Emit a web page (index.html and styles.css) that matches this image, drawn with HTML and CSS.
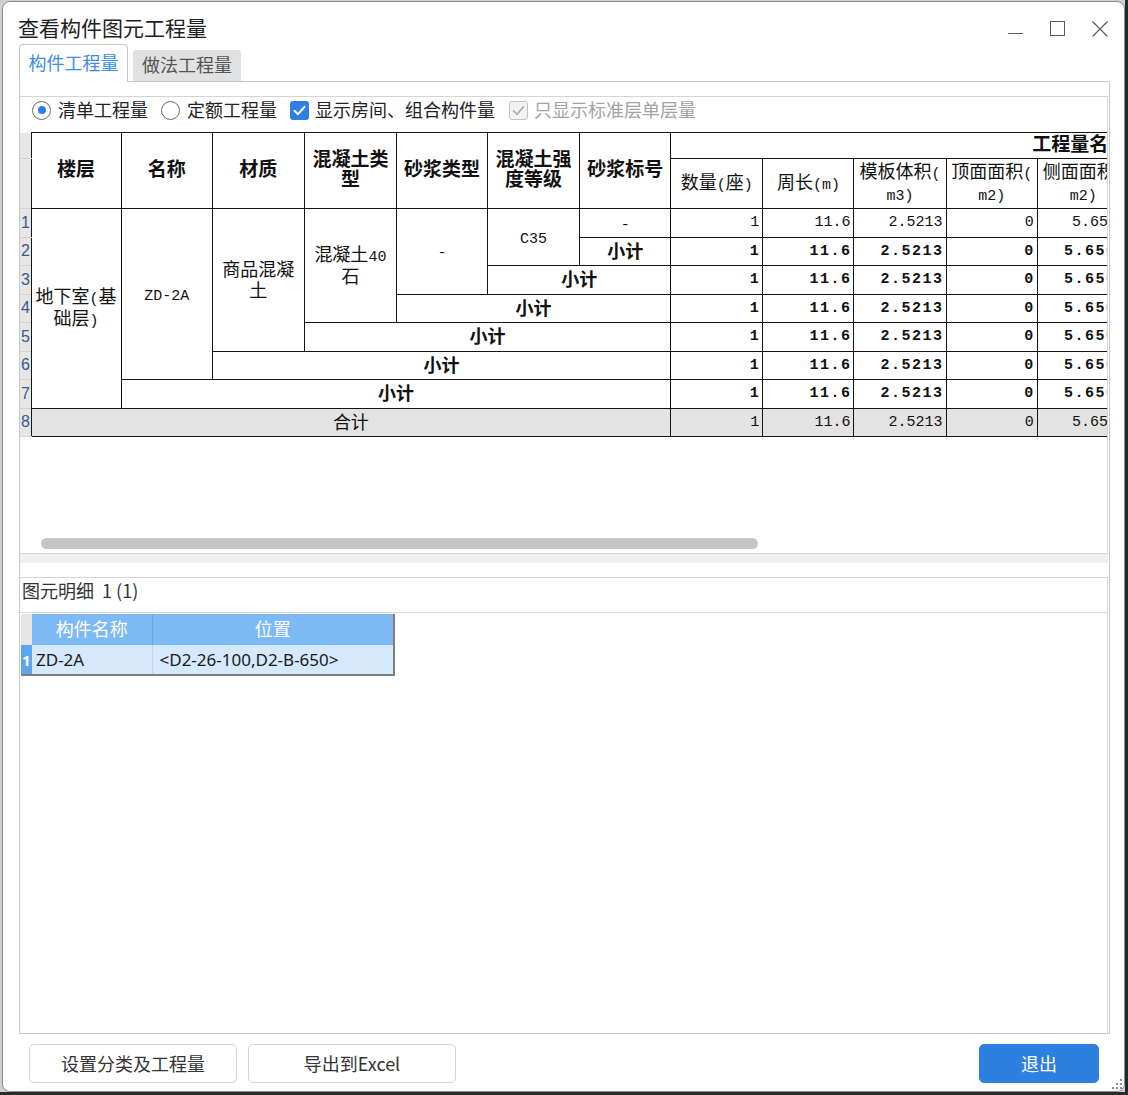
FILE: index.html
```html
<!DOCTYPE html>
<html lang="zh-CN">
<head>
<meta charset="utf-8">
<title>查看构件图元工程量</title>
<link rel="stylesheet" href="styles.css">
</head>
<body>
<div class="window">
  <div class="titlebar">
    <div class="title">查看构件图元工程量</div>
    <div class="wctrls">
      <svg class="wc" width="16" height="16" viewBox="0 0 16 16"><line x1="0" y1="12.5" x2="15" y2="12.5" stroke="#5a5a5a" stroke-width="1"/></svg>
      <svg class="wc wc-gap" width="16" height="16" viewBox="0 0 16 16"><rect x="0.5" y="0.5" width="14" height="14" fill="none" stroke="#5a5a5a" stroke-width="1"/></svg>
      <svg class="wc wc-gap" width="16" height="16" viewBox="0 0 16 16"><path d="M0.5 0.5 L15.5 15.5 M15.5 0.5 L0.5 15.5" stroke="#5a5a5a" stroke-width="1.1" fill="none"/></svg>
    </div>
  </div>

  <div class="tabs">
    <div class="tab active">构件工程量</div>
    <div class="tab inactive">做法工程量</div>
  </div>

  <div class="pane">
    <div class="group">
      <div class="opts">
        <span class="radio on"></span><span class="lbl">清单工程量</span>
        <span class="radio gap"></span><span class="lbl">定额工程量</span>
        <span class="cb gap"><svg width="19" height="19" viewBox="0 0 19 19"><path d="M4.5 9.8 L8 13.2 L14.5 5.8" stroke="#fff" stroke-width="2" fill="none" stroke-linecap="round" stroke-linejoin="round"/></svg></span><span class="lbl lbl-cb">显示房间、组合构件量</span>
        <span class="cb dis gap"><svg width="17" height="17" viewBox="0 0 17 17"><path d="M3.5 8.8 L7 12.2 L13.5 4.8" stroke="#a9a9a9" stroke-width="1.6" fill="none" stroke-linecap="round" stroke-linejoin="round"/></svg></span><span class="lbl lbl-cb dis-t">只显示标准层单层量</span>
      </div>
      <div class="grid-wrap">
        <table class="qt">
          <colgroup>
            <col class="w-rn">
            <col class="w90"><col class="w91"><col class="w92"><col class="w92"><col class="w91"><col class="w92">
            <col class="w91"><col class="w92"><col class="w91"><col class="w92"><col class="w91"><col class="w92">
          </colgroup>
          <thead>
            <tr class="h1">
              <th class="rn"></th>
              <th rowspan="2">楼层</th>
              <th rowspan="2">名称</th>
              <th rowspan="2">材质</th>
              <th rowspan="2">混凝土类<br>型</th>
              <th rowspan="2">砂浆类型</th>
              <th rowspan="2">混凝土强<br>度等级</th>
              <th rowspan="2">砂浆标号</th>
              <th colspan="5" class="grp">工程量名称</th>
            </tr>
            <tr class="h2">
              <th class="rn"></th>
              <th class="sub">数量<span class="a">(</span>座<span class="a">)</span></th>
              <th class="sub">周长<span class="a">(m)</span></th>
              <th class="sub">模板体积<span class="a">(</span><br><span class="a">m3)</span></th>
              <th class="sub">顶面面积<span class="a">(</span><br><span class="a">m2)</span></th>
              <th class="sub">侧面面积<span class="a">(</span><br><span class="a">m2)</span></th>
            </tr>
          </thead>
          <tbody>
            <tr>
              <td class="rn">1</td>
              <td rowspan="7" class="tx">地下室<span class="a">(</span>基<br>础层<span class="a">)</span></td>
              <td rowspan="6" class="tx"><span class="a">ZD-2A</span></td>
              <td rowspan="5" class="tx">商品混凝<br>土</td>
              <td rowspan="4" class="tx">混凝土<span class="a">40</span><br>石</td>
              <td rowspan="3" class="tx"><span class="a">-</span></td>
              <td rowspan="2" class="tx"><span class="a">C35</span></td>
              <td class="tx"><span class="a">-</span></td>
              <td class="num">1</td><td class="num">11.6</td><td class="num">2.5213</td><td class="num">0</td><td class="num">5.6504</td>
            </tr>
            <tr class="b">
              <td class="rn">2</td>
              <td class="tx sum">小计</td>
              <td class="num">1</td><td class="num">11.6</td><td class="num">2.5213</td><td class="num">0</td><td class="num">5.6504</td>
            </tr>
            <tr class="b">
              <td class="rn">3</td>
              <td colspan="2" class="tx sum">小计</td>
              <td class="num">1</td><td class="num">11.6</td><td class="num">2.5213</td><td class="num">0</td><td class="num">5.6504</td>
            </tr>
            <tr class="b">
              <td class="rn">4</td>
              <td colspan="3" class="tx sum">小计</td>
              <td class="num">1</td><td class="num">11.6</td><td class="num">2.5213</td><td class="num">0</td><td class="num">5.6504</td>
            </tr>
            <tr class="b">
              <td class="rn">5</td>
              <td colspan="4" class="tx sum">小计</td>
              <td class="num">1</td><td class="num">11.6</td><td class="num">2.5213</td><td class="num">0</td><td class="num">5.6504</td>
            </tr>
            <tr class="b">
              <td class="rn">6</td>
              <td colspan="5" class="tx sum">小计</td>
              <td class="num">1</td><td class="num">11.6</td><td class="num">2.5213</td><td class="num">0</td><td class="num">5.6504</td>
            </tr>
            <tr class="b">
              <td class="rn">7</td>
              <td colspan="6" class="tx sum">小计</td>
              <td class="num">1</td><td class="num">11.6</td><td class="num">2.5213</td><td class="num">0</td><td class="num">5.6504</td>
            </tr>
            <tr class="total">
              <td class="rn">8</td>
              <td colspan="7" class="tx">合计</td>
              <td class="num">1</td><td class="num">11.6</td><td class="num">2.5213</td><td class="num">0</td><td class="num">5.6504</td>
            </tr>
          </tbody>
        </table>
        <div class="hscroll"><div class="thumb"></div></div>
      </div>
    </div>

    <div class="split"></div>

    <div class="detail">
      <div class="detail-label">图元明细&nbsp;&nbsp;1 (1)</div>
      <div class="detail-body">
        <table class="dt">
          <colgroup><col class="d-rn"><col class="d-c1"><col class="d-c2"></colgroup>
          <thead>
            <tr><th class="d-rnh"></th><th>构件名称</th><th>位置</th></tr>
          </thead>
          <tbody>
            <tr><td class="d-rnc">1</td><td class="d-name">ZD-2A</td><td class="d-pos">&lt;D2-26-100,D2-B-650&gt;</td></tr>
          </tbody>
        </table>
      </div>
    </div>
  </div>

  <div class="buttons">
    <button class="btn">设置分类及工程量</button>
    <button class="btn btn-gap">导出到Excel</button>
    <button class="btn primary">退出</button>
  </div>

  <svg class="grip" width="12" height="12" viewBox="0 0 12 12">
    <rect x="9" y="1" width="2" height="2" fill="#8a8a8a"/>
    <rect x="5" y="5" width="2" height="2" fill="#8a8a8a"/>
    <rect x="9" y="5" width="2" height="2" fill="#8a8a8a"/>
    <rect x="1" y="9" width="2" height="2" fill="#8a8a8a"/>
    <rect x="5" y="9" width="2" height="2" fill="#8a8a8a"/>
    <rect x="9" y="9" width="2" height="2" fill="#8a8a8a"/>
  </svg>
</div>
</body>
</html>
```

FILE: styles.css
```css
* { box-sizing: border-box; }
html, body { margin: 0; padding: 0; }
body {
  width: 1128px;
  height: 1095px;
  overflow: hidden;
  font-family: "Noto Sans CJK SC", "Noto Sans", sans-serif;
  color: #222;
  background:
    linear-gradient(to bottom, rgba(0,0,0,0) 1092px, #2b2b2b 1092px),
    linear-gradient(to right, #cfcfcf 1125px, #1d2a31 1125px);
}

.window {
  margin: 1px 0 0 2px;
  width: 1123px;
  height: 1091px;
  border: 1px solid #8e8e8e;
  border-radius: 8px;
  background: #fff;
  display: flex;
  flex-direction: column;
  position: relative;
  overflow: hidden;
}

/* title bar */
.titlebar {
  height: 42px;
  flex: none;
  display: flex;
  justify-content: space-between;
  align-items: flex-start;
}
.title {
  padding: 11px 0 0 15px;
  font-size: 21px;
  line-height: 28px;
  color: #1e1e1e;
}
.wctrls {
  display: flex;
  padding: 19px 16px 0 0;
}
.wc { display: block; }
.wc-gap { margin-left: 26px; }

/* tabs */
.tabs {
  height: 38px;
  flex: none;
  display: flex;
  align-items: flex-end;
  padding-left: 16px;
  position: relative;
  z-index: 1;
}
.tab {
  font-size: 18px;
  line-height: 20px;
  display: flex;
  align-items: center;
  justify-content: center;
}
.tab.active {
  width: 109px;
  height: 38px;
  border: 1px solid #c6c6c6;
  border-bottom: none;
  border-radius: 4px 4px 0 0;
  background: #fff;
  color: #3b8de6;
  padding-bottom: 3px;
}
.tab.inactive {
  width: 108px;
  height: 31px;
  margin: 0 0 1px 5px;
  background: #e1e1e1;
  border-radius: 3px 3px 0 0;
  color: #555;
  padding-bottom: 3px;
}

/* tab pane */
.pane {
  margin: -1px 0 0 16px;
  width: 1091px;
  height: 953px;
  flex: none;
  border: 1px solid #c9c9c9;
  padding: 14px 1px 0 0;
  display: flex;
  flex-direction: column;
}

.group {
  height: 458px;
  flex: none;
  border: 1px solid #d4d4d4;
  border-left: none;
  display: flex;
  flex-direction: column;
}

.opts {
  height: 35px;
  flex: none;
  display: flex;
  align-items: center;
  padding: 0 0 9px 12px;
}
.radio {
  width: 19px;
  height: 19px;
  border: 1.5px solid #6a6a6a;
  border-radius: 50%;
  display: flex;
  align-items: center;
  justify-content: center;
  flex: none;
}
.radio.on::after {
  content: "";
  width: 8px;
  height: 8px;
  border-radius: 50%;
  background: #2f7fe3;
}
.gap { margin-left: 13px; }
.lbl {
  font-size: 18px;
  line-height: 22px;
  margin-left: 7px;
  color: #222;
  padding-bottom: 2px;
}
.lbl-cb { margin-left: 6px; }
.dis-t { color: #a3a3a3; }
.cb {
  width: 19px;
  height: 19px;
  border-radius: 3px;
  background: #2f7fe3;
  flex: none;
  display: flex;
  align-items: center;
  justify-content: center;
}
.cb svg { display: block; }
.cb.dis {
  background: #f3f3f3;
  border: 1px solid #c2c2c2;
  margin-left: 14px;
}

.grid-wrap {
  flex: 1;
  overflow: hidden;
  display: flex;
  flex-direction: column;
}

/* quantity table */
.qt {
  border-collapse: collapse;
  table-layout: fixed;
  width: 1110px;
  flex: none;
  font-family: "Noto Sans CJK SC", sans-serif;
  color: #111;
}
.w-rn { width: 11px; }
.w90 { width: 90px; }
.w91 { width: 91px; }
.w92 { width: 92px; }

.qt th, .qt td {
  border: 1px solid #151515;
  padding: 0;
  text-align: center;
  vertical-align: middle;
  overflow: hidden;
  white-space: nowrap;
}
.qt th {
  font-size: 19px;
  font-weight: 700;
  line-height: 20px;
  padding-bottom: 5px;
}
.qt .h1 { height: 26px; }
.qt .h2 { height: 50px; }
.qt th.grp {
  text-align: left;
  padding-left: 361px;
}
.qt th.sub {
  font-size: 18px;
  font-weight: 400;
  line-height: 21px;
  padding-bottom: 3px;
}
.qt .a {
  font-family: "Liberation Mono", monospace;
  font-size: 15px;
  line-height: 1;
}
.qt tbody tr { height: 28.5px; }
.qt .rn {
  border: none;
  border-bottom: 1px solid #d2d2d2;
  background: #e6e6e6;
  font-family: "Liberation Sans", sans-serif;
  font-size: 16px;
  line-height: 18px;
  color: #36598f;
  text-align: left;
  padding: 0 0 0 1px;
  font-weight: 400;
}
.qt td.tx {
  font-size: 18px;
  line-height: 21px;
  padding-bottom: 2px;
}
.qt td.sum {
  font-weight: 700;
}
.qt td.num {
  font-family: "Liberation Mono", monospace;
  font-size: 15px;
  text-align: right;
  padding: 0 3px 0 0;
}
.qt tr.b td.num {
  font-weight: 700;
  letter-spacing: 1.5px;
  padding-right: 2px;
}
.qt tr.total td.tx,
.qt tr.total td.num {
  background: #e3e3e3;
}

.hscroll {
  margin-top: auto;
  margin-bottom: 4px;
  height: 11px;
  flex: none;
  padding-left: 21px;
}
.thumb {
  width: 717px;
  height: 11px;
  border-radius: 6px;
  background: #c6c6c6;
}

.split {
  height: 23px;
  flex: none;
  background: linear-gradient(to bottom, #f0f0f0 0, #f0f0f0 9px, #fff 9px);
}

/* detail panel */
.detail {
  flex: 1;
  border-top: 1px solid #d4d4d4;
  border-right: 1px solid #d4d4d4;
  display: flex;
  flex-direction: column;
}
.detail-label {
  height: 35px;
  flex: none;
  border-bottom: 1px solid #dadada;
  padding-left: 2px;
  font-size: 18px;
  line-height: 24px;
  color: #333;
}
.detail-body {
  padding: 1px 0 0 1px;
}
.dt {
  border-collapse: collapse;
  table-layout: fixed;
  width: 373px;
  font-family: "Noto Sans CJK SC", sans-serif;
  border-right: 2px solid #7d7d7d;
  border-bottom: 2px solid #7d7d7d;
}
.d-rn { width: 11px; }
.d-c1 { width: 120px; }
.d-c2 { width: 242px; }
.dt th {
  height: 31px;
  padding: 0 0 3px;
  background: #7db9f5;
  color: #fff;
  font-size: 18px;
  font-weight: 400;
  line-height: 20px;
  text-align: center;
  border-right: 1px solid #6aa8e8;
}
.dt th.d-rnh {
  background: #e6e6e6;
  border-right: none;
}
.dt td {
  height: 30px;
  padding: 0;
  background: #d5e8fc;
  font-family: "Noto Sans", "Noto Sans CJK SC", sans-serif;
  font-size: 17px;
  line-height: 20px;
  color: #1a1a1a;
  border-right: 1px solid #c0d8ef;
  white-space: nowrap;
}
.dt td.d-rnc {
  background: #5aa6ef;
  color: #fff;
  font-weight: 700;
  font-size: 15px;
  padding-left: 1px;
  border-right: none;
}
.dt td.d-name { padding-left: 4px; }
.dt td.d-pos { padding-left: 7px; }

/* buttons */
.buttons {
  height: 39px;
  flex: none;
  margin-top: 10px;
  display: flex;
  align-items: stretch;
  padding: 0 25px 0 26px;
}
.btn {
  width: 208px;
  border: 1px solid #d3d3d3;
  border-radius: 5px;
  background: #fff;
  font-family: "Noto Sans CJK SC", sans-serif;
  font-size: 18px;
  color: #333;
  padding: 0 0 2px;
}
.btn-gap { margin-left: 11px; }
.btn.primary {
  width: 120px;
  margin-left: auto;
  background: #2d7fe0;
  border-color: #2d7fe0;
  color: #fff;
}

.grip {
  position: absolute;
  right: 1px;
  bottom: 1px;
}
```
